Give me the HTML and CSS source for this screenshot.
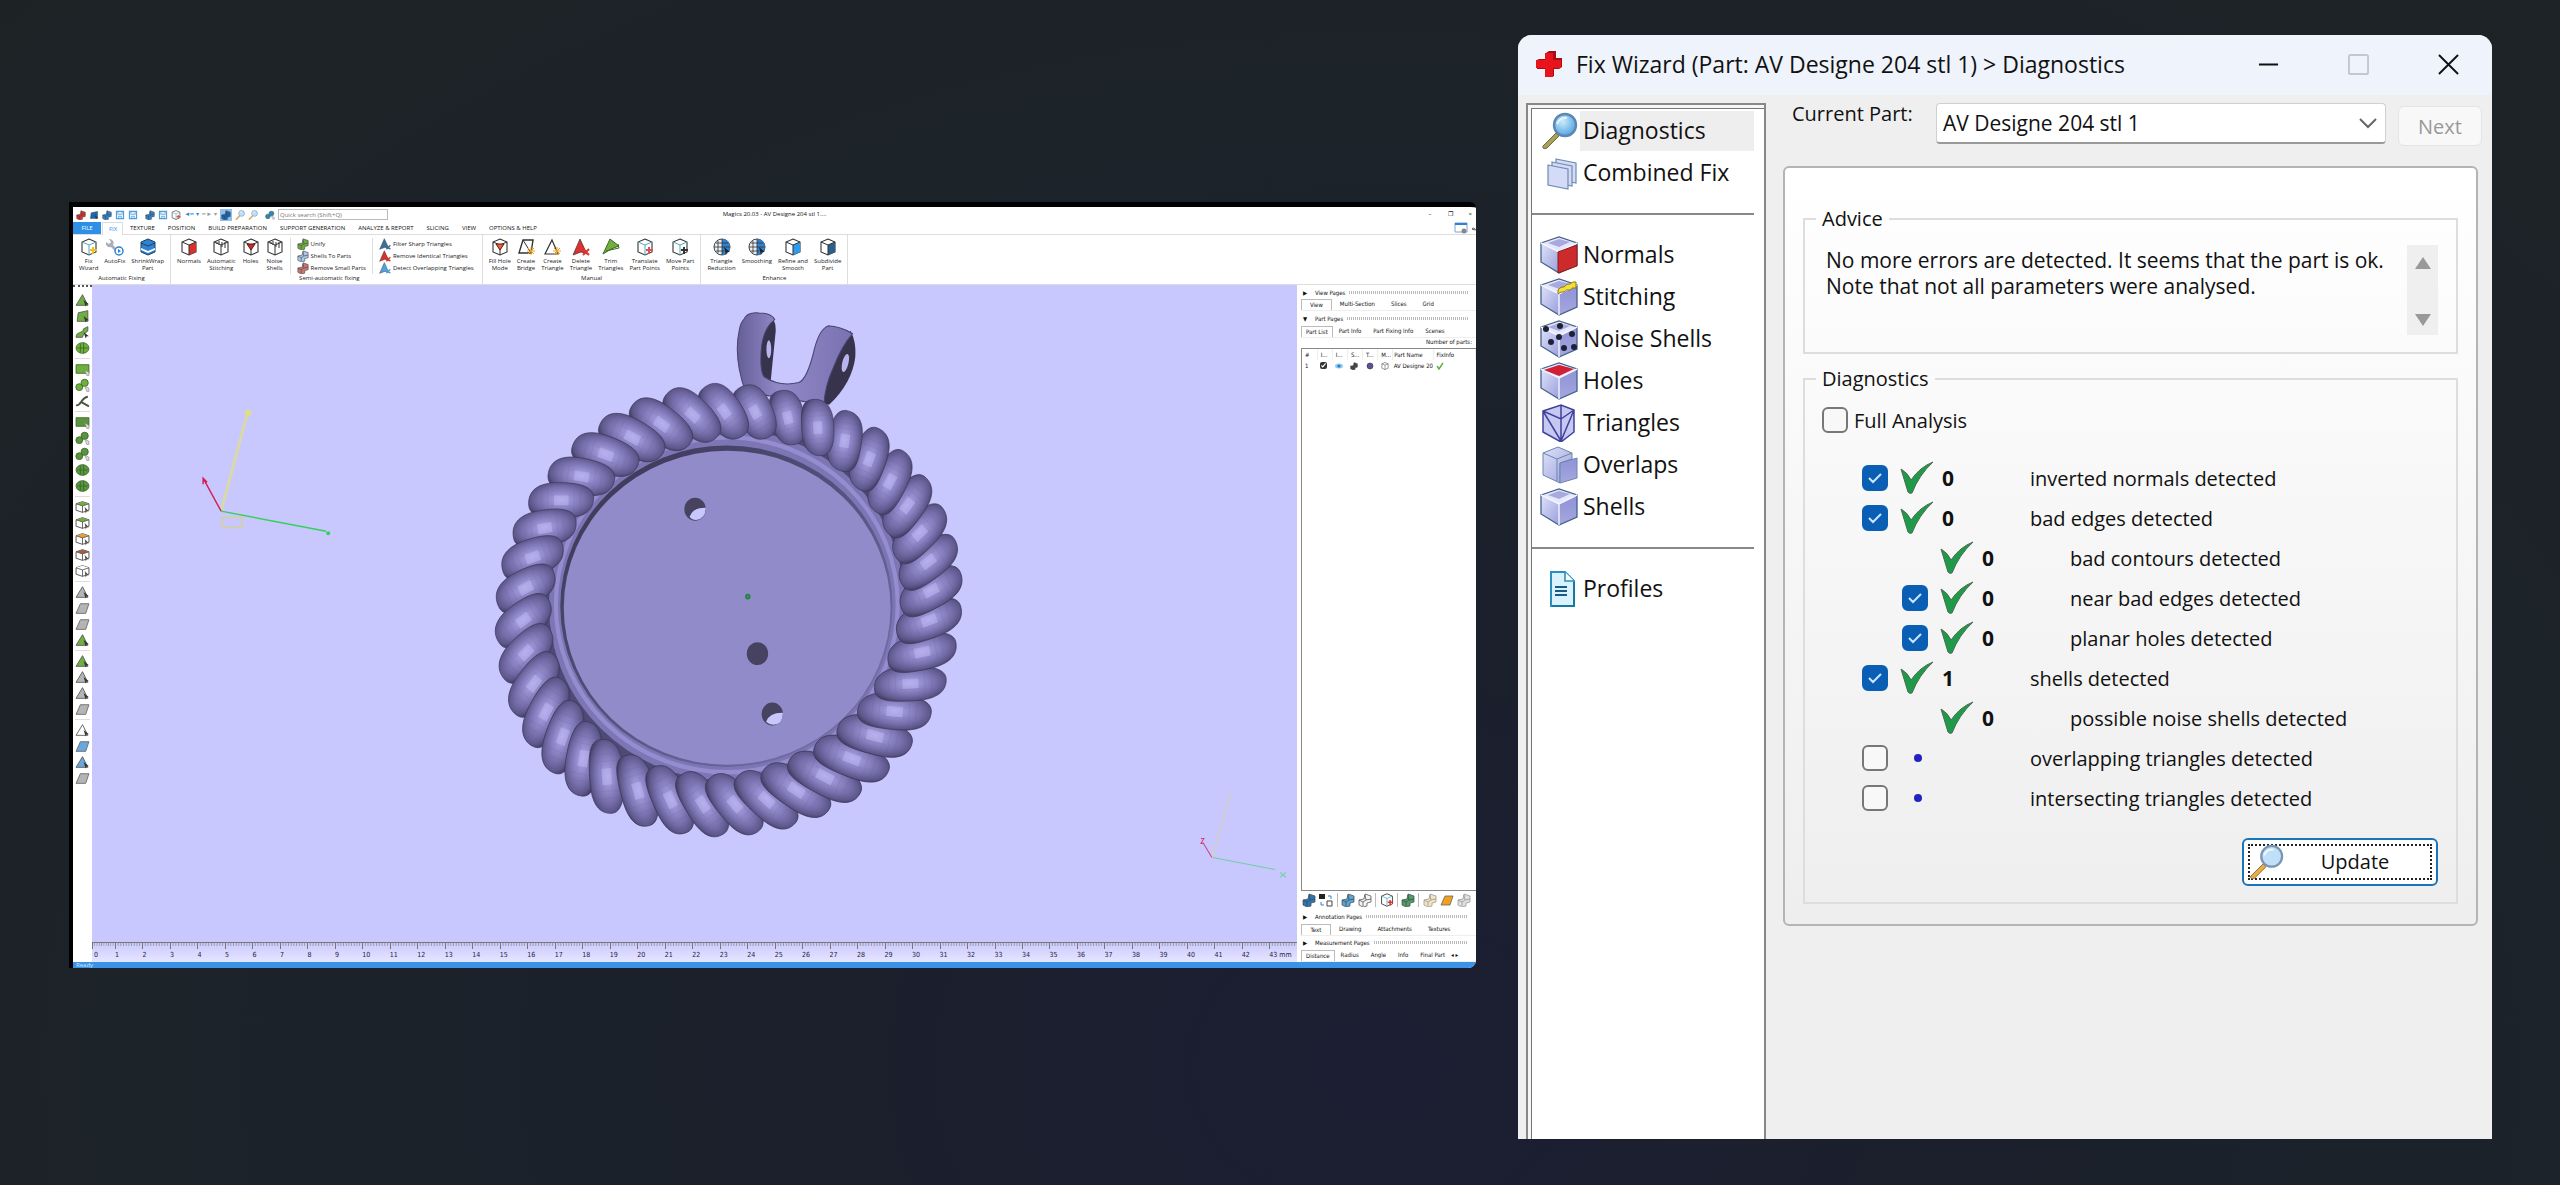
FILE: index.html
```
<!DOCTYPE html>
<html lang="en">
<head>
  <meta charset="UTF-8">
  <title>Fix Wizard</title>
  <link rel="stylesheet" href="styles.css">
</head>
<body>
  <!-- icon sprite -->
  <svg class="sprite" aria-hidden="true">
    <defs>
      <linearGradient id="face" x1="0" y1="0" x2="1" y2="1"><stop offset="0" stop-color="#dfe3fa"/><stop offset="1" stop-color="#9a9edb"/></linearGradient>
      <linearGradient id="side" x1="0" y1="0" x2="0" y2="1"><stop offset="0" stop-color="#8f92d6"/><stop offset="1" stop-color="#a4a7de"/></linearGradient>
      <radialGradient id="lens" cx=".4" cy=".35" r=".7"><stop offset="0" stop-color="#c8ecfb"/><stop offset="1" stop-color="#4f9fe0"/></radialGradient>
      <radialGradient id="beadFill" cx=".5" cy=".48" r=".56"><stop offset="0" stop-color="#aea6e6"/><stop offset=".3" stop-color="#958dce"/><stop offset=".62" stop-color="#7871ae"/><stop offset=".86" stop-color="#5f588c"/><stop offset="1" stop-color="#464069"/></radialGradient>
      <linearGradient id="arm" x1="0" y1="0" x2="1" y2="0"><stop offset="0" stop-color="#655e96"/><stop offset=".35" stop-color="#9188c8"/><stop offset="1" stop-color="#7972b0"/></linearGradient>
      <linearGradient id="rim" x1="0" y1="0" x2="1" y2="1"><stop offset="0" stop-color="#37334f"/><stop offset=".5" stop-color="#57517f"/><stop offset="1" stop-color="#7f78b6"/></linearGradient>
      <g id="bead"><path d="M-103 14C-106-34-64-52-8-52 58-52 106-40 104-6 102 38 62 52 8 52-58 52-100 48-103 14z" fill="url(#beadFill)" stroke="#3b375a" stroke-width="2"/><path d="M-62-24v50M-42-34v68M42-34v68M62-28v56M-34-14H34M-34 16H34" stroke="#5a5488" opacity=".35"/><path d="M-22-15h46v30h-46z" fill="#c3bdf8" opacity=".45"/></g>
    </defs>

    <!-- small ribbon cubes, accent comes from currentColor -->
    <symbol id="cube" viewBox="0 0 18 18"><path d="M9 1l7 3v10l-7 3-7-3V4z" fill="#fff" stroke="#333" stroke-width="1.1"/><path d="M2 4l7 3 7-3M9 7v10" fill="none" stroke="#333"/></symbol>
    <symbol id="cube-side" viewBox="0 0 18 18"><path d="M9 1l7 3v10l-7 3-7-3V4z" fill="#fff" stroke="#333" stroke-width="1.1"/><path d="M9 7l7-3v10l-7 3z" fill="currentColor"/><path d="M2 4l7 3 7-3M9 7v10" fill="none" stroke="#333"/></symbol>
    <symbol id="cube-band" viewBox="0 0 18 18"><path d="M9 1l7 3v10l-7 3-7-3V4z" fill="currentColor" stroke="#1d3f66"/><path d="M2 10l7 3 7-3v2l-7 3-7-3z" fill="#fff"/><path d="M2 5l7 3 7-3" fill="none" stroke="#1d3f66"/></symbol>
    <symbol id="cube-hole" viewBox="0 0 18 18"><path d="M9 1l7 3v10l-7 3-7-3V4z" fill="#fff" stroke="#333" stroke-width="1.1"/><path d="M2 4l7 3 7-3M9 7v10" fill="none" stroke="#333"/><path d="M5 6l8 0-4 6z" fill="currentColor" stroke="#611"/></symbol>
    <symbol id="cube-badge" viewBox="0 0 18 18"><path d="M9 1l7 3v10l-7 3-7-3V4z" fill="#fff" stroke="#333" stroke-width="1.1"/><path d="M2 4l7 3 7-3M9 7v10" fill="none" stroke="#5ab"/><path d="M10 12h7M13 9v7" stroke="currentColor" stroke-width="2"/></symbol>
    <symbol id="cube-stitch" viewBox="0 0 18 18"><path d="M9 1l7 3v10l-7 3-7-3V4z" fill="#fff" stroke="#333" stroke-width="1.1"/><path d="M2 4l7 3 7-3M9 7v10M7 3v4M10 4v5M13 4v6M5 4v2" fill="none" stroke="#333"/></symbol>
    <symbol id="sphere" viewBox="0 0 18 18"><circle cx="9" cy="9" r="8" fill="#e8eef4" stroke="#444"/><path d="M9 1a8 8 0 0 1 0 16z" fill="#2d83d0"/><path d="M1 9h16M9 1v16M3 5h12M3 13h8M5 3v12" stroke="#333" stroke-width=".8"/><path d="M11 9l6 5-3 0-1 3z" fill="#222"/></symbol>
    <symbol id="wrench" viewBox="0 0 18 18"><path d="M3 1l2 3-2 2-3-2a4 4 0 0 0 5 5l6 6 2-2-6-6a4 4 0 0 0-4-6z" fill="#a9afb5"/><circle cx="13" cy="13" r="4" fill="#fff" stroke="#2d83d0" stroke-width="1.5"/><path d="M12 11l3 2-3 2z" fill="#2d83d0"/></symbol>
    <symbol id="tri-line" viewBox="0 0 18 18"><path d="M9 2l6 14H2z" fill="#fff" stroke="#333" stroke-width="1.2"/><path d="M14 9v8M10 13h8M11 10l6 6M17 10l-6 6" stroke="#f0a020"/></symbol>
    <symbol id="bridge" viewBox="0 0 18 18"><path d="M6 2h10l-2 13H2z" fill="#fff" stroke="#333" stroke-width="1.4"/><path d="M6 2l8 13" stroke="#333"/><path d="M14 9v8M10 13h8M11 10l6 6M17 10l-6 6" stroke="#f0a020"/></symbol>
    <symbol id="tri-fill" viewBox="0 0 18 18"><path d="M8 1l7 15-6-2-8 3z" fill="currentColor" stroke="#333" stroke-width=".7"/><path d="M11 11l6 6M17 11l-6 6" stroke="currentColor" stroke-width="2"/></symbol>
    <symbol id="tri-trim" viewBox="0 0 18 18"><path d="M8 1l9 7-8 3-8 5z" fill="#6fae3f" stroke="#3c6a22"/><path d="M4 13l13-3-1-4" fill="none" stroke="#3c6a22"/></symbol>
    <symbol id="blocks" viewBox="0 0 14 14"><path d="M7 1l6 2v6l-4 1v3l-4 1-4-2V7l5-1z" fill="currentColor" stroke="#444" stroke-width=".7"/><path d="M7 2l1 5 5-1M1 7l4 2 3-2M5 9v4" fill="none" stroke="#444" stroke-width=".7"/></symbol>

    <!-- selection toolbar -->
    <symbol id="t-tri" viewBox="0 0 14 12"><path d="M7 1l5 10H1z" fill="currentColor" stroke="#555" stroke-width=".8"/><path d="M8 6l5 4-2 0-1 2z" fill="#333"/></symbol>
    <symbol id="t-plane" viewBox="0 0 14 12"><path d="M3 3l9-2v10H2z" fill="currentColor" stroke="#555" stroke-width=".8"/><path d="M8 6l5 4-2 0-1 2z" fill="#333"/></symbol>
    <symbol id="t-curve" viewBox="0 0 14 12"><path d="M1 11C1 5 7 8 8 3l4-2v4c-2 2-4 2-5 6z" fill="currentColor" stroke="#555" stroke-width=".8"/><path d="M8 6l5 4-2 0-1 2z" fill="#333"/></symbol>
    <symbol id="t-ball" viewBox="0 0 14 12"><ellipse cx="7" cy="6" rx="6" ry="5" fill="currentColor" stroke="#3c6a22" stroke-width=".8"/><path d="M5 2v8M8 1v10M2 6h10" stroke="#3c6a22" stroke-width=".8"/></symbol>
    <symbol id="t-rect" viewBox="0 0 14 12"><path d="M1 2h12v8H1z" fill="currentColor" stroke="#3c6a22" stroke-width=".8"/><path d="M9 7l4 2v3h-2z" fill="#ddd" stroke="#777" stroke-width=".5"/></symbol>
    <symbol id="t-save" viewBox="0 0 14 12"><path d="M2 1h10v10H2z" fill="#e8f3fc" stroke="currentColor" stroke-width="1.6"/><path d="M4 1v4h6V1M5 11V8h4v3" fill="none" stroke="currentColor"/></symbol>
    <symbol id="t-blob" viewBox="0 0 14 12"><circle cx="4" cy="8" r="3.2" fill="currentColor" stroke="#3c6a22" stroke-width=".8"/><circle cx="9" cy="4" r="3.4" fill="currentColor" stroke="#3c6a22" stroke-width=".8"/><path d="M9 7l4 2v3h-2z" fill="#ddd" stroke="#777" stroke-width=".5"/></symbol>
    <symbol id="t-line" viewBox="0 0 14 12"><path d="M1 10c5 1 4-7 11-8M6 7l7 4" fill="none" stroke="#48553f" stroke-width="1.8"/></symbol>
    <symbol id="t-cube" viewBox="0 0 14 12"><path d="M7 1l6 2v6l-6 2-6-2V3z" fill="#fff" stroke="#555" stroke-width=".9"/><path d="M7 1l6 2-6 2-6-2z" fill="currentColor"/><path d="M1 3l6 2 6-2M7 5v6" fill="none" stroke="#555" stroke-width=".8"/><path d="M9 6l4 4-2 0-1 2z" fill="#555"/></symbol>
    <symbol id="t-para" viewBox="0 0 14 12"><path d="M5 2h8l-3 9H1z" fill="currentColor" stroke="#666" stroke-width=".8"/></symbol>

    <!-- wizard page icons -->
    <symbol id="glass" viewBox="0 0 38 38"><path d="M3 34l13-13 3 3L7 36q-5 2-4-2z" fill="#a9a05c" stroke="#6d6a3c"/><circle cx="25" cy="13" r="11" fill="url(#lens)" stroke="#5b87b4" stroke-width="2.4"/><path d="M17 12q3-7 10-6" fill="none" stroke="#fff" stroke-width="2" opacity=".7"/></symbol>
    <symbol id="glass-light" viewBox="0 0 38 38"><path d="M3 34l13-13 3 3L7 36q-5 2-4-2z" fill="#e8ae4a" stroke="#8f6c2c"/><circle cx="25" cy="13" r="11" fill="#bfe0f8" stroke="#7a96b4" stroke-width="2.4"/><path d="M17 12q3-7 10-6" fill="none" stroke="#fff" stroke-width="2" opacity=".8"/></symbol>
    <symbol id="sheets" viewBox="0 0 38 38"><g fill="#d3dbf6" stroke="#6f8bb0" stroke-width="1.2"><path d="M16 5l20 4v20l-20-4z"/><path d="M12 8l20 4v20l-20-4z"/><path d="M8 11l20 4v20L8 31z"/></g></symbol>
    <symbol id="box" viewBox="0 0 38 38"><path d="M1 7l18-6 18 6-18 9z" fill="#e6e7fb"/><path d="M1 7l18 9v21L1 26z" fill="url(#face)"/><path d="M19 16l18-9v22l-18 8z" fill="url(#side)"/><path d="M8 7l11-4 11 3-11 5z" fill="#a7aade"/><path d="M1 7l18-6 18 6v22l-18 8L1 26z" fill="none" stroke="#44628a" stroke-width="1.3"/><path d="M1 7l18 9 18-9M19 16v21" fill="none" stroke="#f4f5ff" stroke-width="1.4"/></symbol>
    <symbol id="box-red" viewBox="0 0 38 38"><use href="#box"/><path d="M18 16l19-7v21l-19 7z" fill="#cd2b2b" stroke="#8a1c1c"/></symbol>
    <symbol id="box-stitch" viewBox="0 0 38 38"><use href="#box"/><path d="M18 12q3-4 6-3 3-4 6-3 3-3 6-2v6q-4-1-6 2-4-1-6 2-3-1-6 2z" fill="#f4e03a" stroke="#8b7a14"/></symbol>
    <symbol id="box-noise" viewBox="0 0 38 38"><use href="#box"/><g fill="#1c2138"><circle cx="6" cy="9" r="3"/><circle cx="20" cy="6" r="3"/><circle cx="11" cy="22" r="3"/><circle cx="19" cy="17" r="3"/><circle cx="32" cy="14" r="3"/><circle cx="24" cy="28" r="3"/><circle cx="34" cy="27" r="3"/></g></symbol>
    <symbol id="box-hole" viewBox="0 0 38 38"><use href="#box"/><path d="M4 8l15-5 15 4-15 7z" fill="#d11f35"/></symbol>
    <symbol id="box-tri" viewBox="0 0 38 38"><path d="M3 7l18-6 13 5v22L21 38 3 28z" fill="#c5c8f0"/><path d="M3 7l18-6 13 5v22L21 38 3 28zM3 7l18 8 13-9M21 15v23M3 7l18 30L34 6M21 1v14" fill="none" stroke="#40409a" stroke-width="1.5"/></symbol>
    <symbol id="box-over" viewBox="0 0 38 38"><path d="M3 7l15-6 14 6v6l-12 4v20L3 29z" fill="url(#face)" stroke="#6c86ac"/><path d="M3 7l14 6 15-6M17 13v22" fill="none" stroke="#6c86ac"/><path d="M20 17l17-5v20l-17 5z" fill="url(#side)" stroke="#6c86ac"/></symbol>
    <symbol id="page" viewBox="0 0 38 38"><path d="M11 2h14l9 9v25H11z" fill="#d9f2fd" stroke="#2b8fbe" stroke-width="2"/><path d="M25 2v9h9" fill="#fff" stroke="#2b8fbe" stroke-width="1.6"/><path d="M15 17h12M15 21h12M15 25h12" stroke="#175b83" stroke-width="2"/><path d="M34 12v24H12" fill="none" stroke="#17799f" stroke-width="2"/></symbol>
    <symbol id="ok" viewBox="0 0 34 34"><path d="M1 8q7 4 10 11Q20 6 33 1 19 14 12 32q-3 1-4-1Q4 18 1 8z" fill="#1f9a49" stroke="#4b6b53"/></symbol>
  </svg>

  <main class="app" aria-label="Magics">
    <header class="app-title">
      <div class="quick">
        <svg style="--c:#d9302c"><use href="#blocks"/></svg>
        <svg style="--c:#1b66b4"><use href="#t-plane"/></svg>
        <svg style="--c:#2d83d0"><use href="#blocks"/></svg>
        <svg style="--c:#4f9fdc"><use href="#t-save"/></svg>
        <svg style="--c:#4f9fdc"><use href="#t-save"/></svg>
        <i></i>
        <svg style="--c:#2d83d0"><use href="#blocks"/></svg>
        <svg style="--c:#4f9fdc"><use href="#t-save"/></svg>
        <svg style="--c:#e05050"><use href="#cube-badge"/></svg>
        <span class="undo">◄━ ▾</span><span class="redo">━► ▾</span>
        <svg class="on" style="--c:#1b66b4"><use href="#blocks"/></svg>
        <svg><use href="#glass-light"/></svg>
        <svg><use href="#glass-light"/></svg>
        <i></i>
        <svg style="--c:#2d83d0"><use href="#t-blob"/></svg>
        <input class="search" type="text" aria-label="Quick search" placeholder="Quick search (Shift+Q)">
      </div>
      <h1>Magics 20.03 - AV Designe 204 stl 1....</h1>
      <div class="app-buttons"><button aria-label="Minimise">–</button><button aria-label="Restore">❐</button><button aria-label="Close">×</button></div>
    </header>

    <nav class="tabs">
      <a class="file" href="#">FILE</a><a class="current" href="#">FIX</a><a href="#">TEXTURE</a><a href="#">POSITION</a><a href="#">BUILD PREPARATION</a><a href="#">SUPPORT GENERATION</a><a href="#">ANALYZE &amp; REPORT</a><a href="#">SLICING</a><a href="#">VIEW</a><a href="#">OPTIONS &amp; HELP</a>
      <svg class="tab-tool" viewBox="0 0 22 12"><path d="M1 1h12v9H1z" fill="#fff" stroke="#7aa6d8"/><path d="M1 1h12v2H1z" fill="#2d83d0"/><circle cx="10" cy="9" r="2.5" fill="#888"/><path d="M18 7q1-2 3 0t-3 0" fill="none" stroke="#555"/></svg>
    </nav>

    <section class="ribbon">
      <div class="group">
        <div class="tools">
          <button><svg style="--c:#f0c020"><use href="#cube-badge"/></svg>Fix<br>Wizard</button>
          <button><svg><use href="#wrench"/></svg>AutoFix</button>
          <button><svg style="--c:#2d83d0"><use href="#cube-band"/></svg>ShrinkWrap<br>Part</button>
        </div>
        <h2>Automatic Fixing</h2>
      </div>
      <div class="group semi">
        <div class="tools">
          <button><svg style="--c:#d9302c"><use href="#cube-side"/></svg>Normals</button>
          <button><svg><use href="#cube-stitch"/></svg>Automatic<br>Stitching</button>
          <button><svg style="--c:#c03030"><use href="#cube-hole"/></svg>Holes</button>
          <button><svg style="--c:#333"><use href="#cube-stitch"/></svg>Noise<br>Shells</button>
          <div class="list">
            <button><svg style="--c:#6fae3f"><use href="#blocks"/></svg>Unify</button>
            <button><svg style="--c:#a9c9ea"><use href="#blocks"/></svg>Shells To Parts</button>
            <button><svg style="--c:#c77"><use href="#blocks"/></svg>Remove Small Parts</button>
          </div>
          <div class="list wide">
            <button><svg style="--c:#3a6f9c"><use href="#tri-fill"/></svg>Filter Sharp Triangles</button>
            <button><svg style="--c:#d9302c"><use href="#tri-fill"/></svg>Remove Identical Triangles</button>
            <button><svg style="--c:#4fa3e0"><use href="#tri-fill"/></svg>Detect Overlapping Triangles</button>
          </div>
        </div>
        <h2>Semi-automatic fixing</h2>
      </div>
      <div class="group">
        <div class="tools">
          <button><svg style="--c:#e06a30"><use href="#cube-hole"/></svg>Fill Hole<br>Mode</button>
          <button><svg><use href="#bridge"/></svg>Create<br>Bridge</button>
          <button><svg><use href="#tri-line"/></svg>Create<br>Triangle</button>
          <button><svg style="--c:#e03030"><use href="#tri-fill"/></svg>Delete<br>Triangle</button>
          <button><svg><use href="#tri-trim"/></svg>Trim<br>Triangles</button>
          <button><svg style="--c:#e05050"><use href="#cube-badge"/></svg>Translate<br>Part Points</button>
          <button><svg style="--c:#333"><use href="#cube-badge"/></svg>Move Part<br>Points</button>
        </div>
        <h2>Manual</h2>
      </div>
      <div class="group">
        <div class="tools">
          <button><svg><use href="#sphere"/></svg>Triangle<br>Reduction</button>
          <button><svg><use href="#sphere"/></svg>Smoothing</button>
          <button><svg style="--c:#2d9bee"><use href="#cube-side"/></svg>Refine and<br>Smooth</button>
          <button><svg style="--c:#2a5f8f"><use href="#cube-side"/></svg>Subdivide<br>Part</button>
        </div>
        <h2>Enhance</h2>
      </div>
    </section>

    <div class="work">
      <aside class="toolbox">
        <div><svg><use href="#t-tri"/></svg><svg><use href="#t-plane"/></svg><svg><use href="#t-curve"/></svg><svg><use href="#t-ball"/></svg></div>
        <div><svg><use href="#t-rect"/></svg><svg><use href="#t-blob"/></svg><svg><use href="#t-line"/></svg></div>
        <div class="deep"><svg><use href="#t-rect"/></svg><svg><use href="#t-blob"/></svg><svg><use href="#t-blob"/></svg><svg><use href="#t-ball"/></svg><svg><use href="#t-ball"/></svg></div>
        <div><svg><use href="#t-cube"/></svg><svg><use href="#t-cube"/></svg><svg class="orange"><use href="#t-cube"/></svg><svg class="brown"><use href="#t-cube"/></svg><svg class="white"><use href="#t-cube"/></svg></div>
        <div class="off"><svg><use href="#t-tri"/></svg><svg><use href="#t-para"/></svg><svg><use href="#t-para"/></svg><svg class="green"><use href="#t-tri"/></svg></div>
        <div class="off"><svg class="green"><use href="#t-tri"/></svg><svg><use href="#t-tri"/></svg><svg><use href="#t-tri"/></svg><svg><use href="#t-para"/></svg></div>
        <div class="off"><svg class="white"><use href="#t-tri"/></svg><svg class="blue"><use href="#t-para"/></svg><svg class="blue"><use href="#t-tri"/></svg><svg><use href="#t-para"/></svg></div>
      </aside>

      <div class="stage">
        <svg class="scene" viewBox="0 0 1204 656" role="img" aria-label="Ring pendant model">
          <g fill="none">
            <path d="M129 226l26-97" stroke="#d9d9a8" stroke-width="3"/><path d="M153 125h6v6h-6z" fill="#dddd90"/>
            <path d="M130 232h20v10h-20z" stroke="#d0d0b0" stroke-width="2"/>
            <path d="M129 226l-18-33m0 6v-6l4 4" stroke="#d01f50" stroke-width="1.4"/>
            <path d="M129 226l105 20" stroke="#35d05a" stroke-width="1.4"/><circle cx="236" cy="248" r="2" fill="#35d05a"/>
            <path d="M1120 572l15-58" stroke="#cfcfd0" stroke-width="2"/><path d="M1134 508l3 4 3-4m-3 4v4" stroke="#cfcfc0"/>
            <path d="M1119 572l-9-15m-2-4h3l-3 5h3" stroke="#d04070"/>
            <path d="M1120 572l62 12m5 3l6 5m0-5l-6 5" stroke="#6fd0a0"/>
          </g>
          <g transform="translate(367 5) scale(.3444 .37)">
            <!-- bail -->
            <path d="M880 95Q919 60 918 110L903 250 960 270 870 240z" fill="#37334c"/>
            <path d="M1135 110Q1152 140 1149 180 1140 250 1073 310L1020 300 1050 220z" fill="#37334c"/>
            <path d="M825 80Q835 58 870 62 905 62 915 80 885 100 877 150 870 220 885 235 930 262 985 250 1010 240 1030 160 1045 105 1070 97 1105 98 1141 118 1110 150 1085 210 1060 260 1058 310L830 275Q795 180 812 110 815 90 825 80z" fill="url(#arm)" stroke="#4a4570" stroke-width="3"/>
            <ellipse cx="898" cy="160" rx="7" ry="24" fill="#b9b5ee"/><ellipse cx="1120" cy="197" rx="9" ry="25" transform="rotate(15 1120 197)" fill="#b9b5ee"/>
            <ellipse cx="780" cy="868" rx="590" ry="530" fill="#4f4a75"/>
            <ellipse cx="776" cy="850" rx="516" ry="474" fill="#7d76b4"/>
            <ellipse cx="776" cy="850" rx="496" ry="452" fill="none" stroke="#958dcf" stroke-width="12"/>
            <ellipse cx="775" cy="854" rx="482" ry="434" fill="url(#rim)"/>
            <ellipse cx="777" cy="858" rx="474" ry="424" fill="#928bca"/>
            <!-- rope, one bead per twist -->
            <g class="rope">
              <use href="#bead" transform="translate(953 344) rotate(76) scale(.73 .92)"/>
              <use href="#bead" transform="translate(858 329) rotate(62) scale(.76 .96)"/>
              <use href="#bead" transform="translate(768 327) rotate(52) scale(.83 .96)"/>
              <use href="#bead" transform="translate(676 337) rotate(41) scale(.9 .96)"/>
              <use href="#bead" transform="translate(586 362) rotate(34) scale(.95 .96)"/>
              <use href="#bead" transform="translate(501 398) rotate(26) scale(.96 .96)"/>
              <use href="#bead" transform="translate(424 444) rotate(18) scale(.95 .96)"/>
              <use href="#bead" transform="translate(354 503) rotate(9) scale(.93 .94)"/>
              <use href="#bead" transform="translate(295 568) rotate(0) scale(.91 .92)"/>
              <use href="#bead" transform="translate(247 643) rotate(-9) scale(.9 .94)"/>
              <use href="#bead" transform="translate(212 722) rotate(-18) scale(.9 .96)"/>
              <use href="#bead" transform="translate(192 805) rotate(-26) scale(.89 .96)"/>
              <use href="#bead" transform="translate(185 892) rotate(-35) scale(.89 .96)"/>
              <use href="#bead" transform="translate(193 980) rotate(-43) scale(.91 .96)"/>
              <use href="#bead" transform="translate(216 1064) rotate(-52) scale(.94 .96)"/>
              <use href="#bead" transform="translate(251 1140) rotate(-61) scale(.96 .96)"/>
              <use href="#bead" transform="translate(300 1207) rotate(-70) scale(.97 .96)"/>
              <use href="#bead" transform="translate(360 1266) rotate(-80) scale(.97 .96)"/>
              <use href="#bead" transform="translate(428 1313) rotate(86) scale(.97 .96)"/>
              <use href="#bead" transform="translate(518 1351) rotate(74) scale(.97 .96)"/>
              <use href="#bead" transform="translate(612 1376) rotate(64) scale(.97 .96)"/>
              <use href="#bead" transform="translate(706 1388) rotate(56) scale(.97 .96)"/>
              <use href="#bead" transform="translate(799 1388) rotate(48) scale(.97 .96)"/>
              <use href="#bead" transform="translate(891 1376) rotate(40) scale(1.01 .96)"/>
              <use href="#bead" transform="translate(977 1350) rotate(32) scale(1.05 .96)"/>
              <use href="#bead" transform="translate(1060 1314) rotate(26) scale(1.08 .96)"/>
              <use href="#bead" transform="translate(1138 1265) rotate(20) scale(1.08 .96)"/>
              <use href="#bead" transform="translate(1205 1204) rotate(14) scale(1.06 .96)"/>
              <use href="#bead" transform="translate(1262 1138) rotate(5) scale(1.03 .94)"/>
              <use href="#bead" transform="translate(1308 1063) rotate(-3) scale(1.01 .9)"/>
              <use href="#bead" transform="translate(1342 978) rotate(-11) scale(.98 .92)"/>
              <use href="#bead" transform="translate(1362 892) rotate(-19) scale(.96 .94)"/>
              <use href="#bead" transform="translate(1368 812) rotate(-27) scale(.95 .94)"/>
              <use href="#bead" transform="translate(1360 734) rotate(-35) scale(.94 .94)"/>
              <use href="#bead" transform="translate(1335 657) rotate(-43) scale(.92 .94)"/>
              <use href="#bead" transform="translate(1299 583) rotate(-52) scale(.9 .94)"/>
              <use href="#bead" transform="translate(1249 518) rotate(-61) scale(.88 .94)"/>
              <use href="#bead" transform="translate(1189 457) rotate(-69) scale(.84 .94)"/>
              <use href="#bead" transform="translate(1118 408) rotate(-81) scale(.79 .94)"/>
              <use href="#bead" transform="translate(1040 371) rotate(86) scale(.74 .9)"/>
            </g>
            <g fill="#47425f"><circle cx="684" cy="592" r="31"/><circle cx="865" cy="982" r="31"/><circle cx="908" cy="1145" r="31"/></g>
            <g fill="#c8c7fc"><path d="M668 612q10-25 47-24 0 30-28 33-12 0-19-9z"/><path d="M890 1166q10-25 49-24 0 30-28 32-12 0-21-8z"/></g>
            <circle cx="837" cy="828" r="6" fill="#4a8a70" stroke="#18863a" stroke-width="4"/>
          </g>
        </svg>
        <ol class="ruler" start="0">
          <li>0</li><li>1</li><li>2</li><li>3</li><li>4</li><li>5</li><li>6</li><li>7</li><li>8</li><li>9</li><li>10</li><li>11</li><li>12</li><li>13</li><li>14</li><li>15</li><li>16</li><li>17</li><li>18</li><li>19</li><li>20</li><li>21</li><li>22</li><li>23</li><li>24</li><li>25</li><li>26</li><li>27</li><li>28</li><li>29</li><li>30</li><li>31</li><li>32</li><li>33</li><li>34</li><li>35</li><li>36</li><li>37</li><li>38</li><li>39</li><li>40</li><li>41</li><li>42</li><li>43 <span>mm</span></li>
        </ol>
      </div>

      <aside class="pages">
        <h3>View Pages</h3>
        <nav class="subtabs"><a class="current" href="#">View</a><a href="#">Multi-Section</a><a href="#">Slices</a><a href="#">Grid</a></nav>
        <h3 class="open">Part Pages</h3>
        <nav class="subtabs part-tabs"><a class="current" href="#">Part List</a><a href="#">Part Info</a><a href="#">Part Fixing Info</a><a href="#">Scenes</a></nav>
        <p class="count">Number of parts:</p>
        <div class="parts">
          <table>
            <thead><tr><th>#</th><th>I...</th><th>I...</th><th>S...</th><th>T...</th><th>M...</th><th class="name">Part Name</th><th class="info">FixInfo</th></tr></thead>
            <tbody><tr>
              <td>1</td>
              <td><input type="checkbox" aria-label="Select part" checked></td>
              <td><svg viewBox="0 0 8 8"><ellipse cx="4" cy="4" rx="4" ry="2.5" fill="#8fcdf2"/><circle cx="4" cy="4" r="1.6" fill="#2a7ec0"/></svg></td>
              <td><svg style="--c:#444"><use href="#blocks"/></svg></td>
              <td><svg viewBox="0 0 8 8"><circle cx="4" cy="4" r="3" fill="#5a5490" stroke="#333" stroke-width=".6"/></svg></td>
              <td><svg><use href="#cube"/></svg></td>
              <td class="name">AV Designe 20</td>
              <td class="info"><svg viewBox="0 0 8 8"><path d="M1 4l2 3 4-6" fill="none" stroke="#5fae3a" stroke-width="1.4"/></svg></td>
            </tr></tbody>
          </table>
        </div>
        <div class="part-tools">
          <svg style="--c:#2a78b8"><use href="#blocks"/></svg>
          <svg viewBox="0 0 14 14"><path d="M0 1h6v5H0z" fill="#222"/><path d="M8 8h5v5H8z" fill="#fff" stroke="#444"/><path d="M9 3h3v3M2 9v3h3" fill="none" stroke="#2d83d0"/></svg>
          <i></i>
          <svg style="--c:#5aa6d8"><use href="#blocks"/></svg>
          <svg style="--c:#f4f4f4"><use href="#blocks"/></svg>
          <i></i>
          <svg style="--c:#e03030"><use href="#cube-badge"/></svg>
          <i></i>
          <svg style="--c:#4f9f6a"><use href="#blocks"/></svg>
          <i></i>
          <svg class="faint" style="--c:#e8d49a"><use href="#blocks"/></svg>
          <svg style="--c:#f0a020"><use href="#t-para"/></svg>
          <svg class="faint" style="--c:#ccc"><use href="#blocks"/></svg>
        </div>
        <h3>Annotation Pages</h3>
        <nav class="subtabs"><a class="current" href="#">Text</a><a href="#">Drawing</a><a href="#">Attachments</a><a href="#">Textures</a></nav>
        <h3>Measurement Pages</h3>
        <nav class="subtabs measure-tabs"><a class="current" href="#">Distance</a><a href="#">Radius</a><a href="#">Angle</a><a href="#">Info</a><a href="#">Final Part</a><span>◂ ▸</span></nav>
      </aside>
    </div>
    <footer class="status">Ready</footer>
  </main>

  <section class="wizard" aria-label="Fix Wizard">
    <header class="wizard-title">
      <svg class="cross" viewBox="0 0 28 28"><path d="M11 3l3-2h7v7h6l0 9-3 2h-5v7l-2 1h-7v-8H2v-9l2-1h6z" fill="#a80d12"/><path d="M10 3h8v7h8v8h-8v9h-8v-9H1v-8h9z" fill="#e8141b"/></svg>
      <h1>Fix Wizard (Part: AV Designe 204 stl 1) &gt; Diagnostics</h1>
      <div class="win-buttons">
        <button aria-label="Minimise"><svg viewBox="0 0 22 22"><path d="M1 11h20" stroke="#111" stroke-width="2"/></svg></button>
        <button aria-label="Maximise" disabled><svg viewBox="0 0 22 22"><rect x="1" y="1" width="20" height="20" rx="2" fill="none" stroke="#c3c7ce" stroke-width="2"/></svg></button>
        <button aria-label="Close"><svg viewBox="0 0 22 22"><path d="M1 1l20 20M21 1L1 21" stroke="#111" stroke-width="2"/></svg></button>
      </div>
    </header>

    <div class="wizard-body">
      <nav class="steps">
        <a class="current" href="#"><svg><use href="#glass"/></svg><span>Diagnostics</span></a>
        <a href="#"><svg><use href="#sheets"/></svg><span>Combined Fix</span></a>
        <hr>
        <a href="#"><svg><use href="#box-red"/></svg><span>Normals</span></a>
        <a href="#"><svg><use href="#box-stitch"/></svg><span>Stitching</span></a>
        <a href="#"><svg><use href="#box-noise"/></svg><span>Noise Shells</span></a>
        <a href="#"><svg><use href="#box-hole"/></svg><span>Holes</span></a>
        <a href="#"><svg><use href="#box-tri"/></svg><span>Triangles</span></a>
        <a href="#"><svg><use href="#box-over"/></svg><span>Overlaps</span></a>
        <a href="#"><svg><use href="#box"/></svg><span>Shells</span></a>
        <hr>
        <a href="#"><svg><use href="#page"/></svg><span>Profiles</span></a>
      </nav>

      <div class="content">
        <div class="part-row">
          <label for="part">Current Part:</label>
          <select id="part"><option>AV Designe 204 stl 1</option></select>
          <button class="next" disabled>Next</button>
        </div>

        <div class="panel">
          <fieldset class="advice">
            <legend>Advice</legend>
            <p>No more errors are detected. It seems that the part is ok.<br>Note that not all parameters were analysed.</p>
            <div class="scroll"><i class="up"></i><i class="down"></i></div>
          </fieldset>

          <fieldset class="diag">
            <legend>Diagnostics</legend>
            <label class="full"><input type="checkbox">Full Analysis</label>
            <ul>
              <li><input type="checkbox" id="c1" checked><svg><use href="#ok"/></svg><b>0</b><label for="c1">inverted normals detected</label></li>
              <li><input type="checkbox" id="c2" checked><svg><use href="#ok"/></svg><b>0</b><label for="c2">bad edges detected</label></li>
              <li class="sub"><i></i><svg><use href="#ok"/></svg><b>0</b><span>bad contours detected</span></li>
              <li class="sub"><input type="checkbox" id="c3" checked><svg><use href="#ok"/></svg><b>0</b><label for="c3">near bad edges detected</label></li>
              <li class="sub"><input type="checkbox" id="c4" checked><svg><use href="#ok"/></svg><b>0</b><label for="c4">planar holes detected</label></li>
              <li><input type="checkbox" id="c5" checked><svg><use href="#ok"/></svg><b>1</b><label for="c5">shells detected</label></li>
              <li class="sub"><i></i><svg><use href="#ok"/></svg><b>0</b><span>possible noise shells detected</span></li>
              <li><input type="checkbox" id="c6"><i class="dot"></i><b></b><label for="c6">overlapping triangles detected</label></li>
              <li><input type="checkbox" id="c7"><i class="dot"></i><b></b><label for="c7">intersecting triangles detected</label></li>
            </ul>
            <button class="update"><svg><use href="#glass-light"/></svg><span>Update</span></button>
          </fieldset>
        </div>
      </div>
    </div>
  </section>
</body>
</html>
```
FILE: styles.css
```
* { box-sizing: border-box; }
body {
  display: flex;
  gap: 42px;
  min-height: 100vh;
  margin: 0;
  padding: 35px 68px 47px 69px;
  font-family: "Open Sans", "Noto Sans", sans-serif;
  color: #111;
  background: radial-gradient(ellipse at 54% 90%, #1c1e33 0, #1b202c 30%, #1b222a 50%, #1d2325 100%);
}
h1, h2, h3, p, ul, ol { margin: 0; padding: 0; font-weight: normal; list-style: none; }
a { color: inherit; text-decoration: none; }
button, input, select { font: inherit; color: inherit; }
svg { display: block; flex: none; color: var(--c, #6fae3f); }
.sprite { position: absolute; width: 0; height: 0; }

/* ---- main application ---- */
.app {
  display: flex;
  flex-direction: column;
  flex: 1403 1 0;
  min-width: 0;
  margin: 167px 0 171px;
  border: solid #000;
  border-width: 5px 0 0 4px;
  border-radius: 0 6px 8px 0;
  background: #fff;
  font-size: 6px;
  line-height: 7px;
  overflow: hidden;
}
.app button { padding: 0; border: 0; background: none; }
.app-title { display: grid; grid-template-columns: 1fr auto 1fr; align-items: center; height: 15px; }
.app-title h1 { font-size: 6px; }
.quick { display: flex; align-items: center; gap: 3px; padding-left: 3px; }
.quick svg { width: 10px; height: 10px; }
.quick i { width: 1px; }
.quick .on { width: 12px; height: 12px; padding: 1px; background: #8fc0ee; }
.undo { width: 15px; color: #2d83d0; text-align: center; white-space: nowrap; }
.redo { width: 15px; color: #999; text-align: center; white-space: nowrap; }
.search { width: 110px; height: 11px; padding: 0 1px; border: 1px solid #bbb; font-size: 6px; }
.search::placeholder { color: #777; }
.app-buttons { display: flex; justify-content: flex-end; gap: 16px; padding-right: 4px; }

.tabs { display: flex; gap: 1px; height: 13px; line-height: 12px; border-bottom: 1px solid #ddd; }
.tabs a { padding: 0 6px; }
.tabs .file { width: 28px; color: #fff; background: #2e8fe6; text-align: center; }
.tabs .current { width: 21px; height: 13px; border: 1px solid #ddd; border-bottom: 0; color: #2e8fe6; background: #fff; }
.tab-tool { width: 22px; height: 12px; margin-left: auto; }

.ribbon { display: flex; height: 50px; border-bottom: 1px solid #ddd; color: #222; }
.group { display: flex; flex-direction: column; padding: 3px 6px 0; border-right: 1px solid #ddd; }
.group.semi { padding-right: 0; }
.group h2 { margin-top: auto; padding-bottom: 2px; font-size: 6px; text-align: center; }
.tools { display: flex; gap: 6px; height: 36px; white-space: nowrap; }
.tools > button { display: flex; flex-direction: column; align-items: center; min-width: 18px; }
.tools svg { width: 18px; height: 18px; margin: 0 auto 2px; }
.list { display: grid; grid-template-rows: repeat(3, 12px); padding-left: 6px; border-left: 1px solid #ddd; }
.list.wide { padding-right: 8px; }
.list button { display: flex; align-items: center; gap: 2px; }
.list svg { width: 12px; height: 12px; margin: 0; }

.work { display: flex; flex: 1; min-height: 0; }
.toolbox { width: 19px; padding: 5px 2px 0; border-top: 2px dotted #555; }
.toolbox div { margin-bottom: 2px; padding-bottom: 2px; border-bottom: 1px solid #ddd; }
.toolbox div:last-child { border: 0; }
.toolbox svg { width: 15px; height: 16px; color: #6fae3f; }
.toolbox .deep svg { color: #5a9440; }
.toolbox .off svg { color: #b4b4b4; }
.toolbox .off .green { color: #6fae3f; }
.toolbox .off .blue { color: #6aa7dd; }
.toolbox .white, .toolbox .off .white { color: #fff; }
.toolbox .orange { color: #e8a030; }
.toolbox .brown { color: #a0603a; }

.stage { display: flex; flex-direction: column; flex: 1; min-width: 0; background: #c8c7fe; }
.scene { flex: 1; width: 100%; min-height: 0; }
.ruler { display: flex; height: 20px; border-top: 1px solid #777; background: linear-gradient(#cbcafe, #e6e5ff); color: #224; font-family: "DejaVu Sans Condensed", sans-serif; font-size: 7px; }
.ruler li {
  flex: 1 1 0;
  min-width: 0;
  padding-top: 9px;
  white-space: nowrap;
  background: linear-gradient(#777, #777) 0 0 / 1px 6px no-repeat, linear-gradient(90deg, #999 1px, transparent 1px) 0 0 / 10% 3px repeat-x;
}
.ruler li:first-child { flex: 0 0 23px; padding-left: 2px; }

.pages { display: flex; flex-direction: column; width: 179px; padding-left: 4px; font-family: "DejaVu Sans Condensed", "Open Sans", sans-serif; }
.pages h3 { display: flex; align-items: center; gap: 4px; height: 14px; padding: 0 2px; font-size: 6px; }
.pages h3::before { content: "▶"; width: 8px; }
.pages h3.open::before { content: "▼"; }
.pages h3::after { content: ""; flex: 1; height: 3px; margin-right: 6px; background: repeating-linear-gradient(90deg, #bbb 0 1px, #fff 1px 2px); }
.subtabs { display: flex; height: 12px; line-height: 10px; border-bottom: 1px solid #eee; white-space: nowrap; }
.subtabs a { padding: 0 8px; }
.subtabs .current { min-width: 30px; border: 1px solid #bbb; border-bottom: 0; background: #fff; text-align: center; }
.part-tabs a, .measure-tabs a { padding: 0 6px; }
.part-tabs .current, .measure-tabs .current { padding: 0 4px; }
.part-tabs { margin-top: 1px; }
.count { height: 8px; padding-right: 4px; text-align: right; }
.parts { flex: 1; margin-top: 2px; border: solid #888; border-width: 1px 0 1px 1px; }
.parts table { table-layout: fixed; width: 100%; border-collapse: collapse; }
.parts th, .parts td { width: 15px; height: 11px; padding: 0 3px; font-weight: normal; text-align: left; white-space: nowrap; overflow: hidden; }
.parts th { border-right: 1px solid #eee; }
.parts .name { width: 40px; padding: 0 1px; }
.parts .info { width: 42px; }
.parts svg { width: 8px; height: 8px; }
.parts input { display: block; width: 7px; height: 7px; margin: 0; accent-color: #333; }
.part-tools { display: flex; align-items: center; justify-content: space-between; height: 19px; padding: 0 5px 0 1px; }
.part-tools svg { width: 14px; height: 14px; }
.part-tools i { width: 1px; height: 14px; background: #bbb; }
.faint { opacity: .6; }
.status { height: 6px; padding-left: 3px; background: #3b93e8; color: #cfe5fb; line-height: 6px; }

/* ---- fix wizard ---- */
.wizard {
  display: flex;
  flex-direction: column;
  flex: 974 1 0;
  min-width: 0;
  border-radius: 14px 14px 0 0;
  background: #efefef;
  font-size: 20px;
  overflow: hidden;
}
.wizard-title { display: flex; align-items: center; height: 60px; padding: 0 0 2px 17px; background: #eff3fb; }
.cross { width: 28px; height: 28px; margin-right: 13px; }
.wizard-title h1 { font-size: 23px; }
.win-buttons { display: flex; gap: 2px; margin-left: auto; }
.win-buttons button { display: grid; place-items: center; width: 88px; height: 56px; padding: 0; border: 0; background: none; }
.win-buttons svg { width: 21px; height: 21px; }
.wizard-body { display: flex; flex: 1; padding: 8px 10px 0 8px; }

.steps { width: 240px; padding: 5px 10px 0 4px; border: solid #888; border-width: 2px 2px 0; background: #fff; box-shadow: inset 3px 3px 0 #f6f6f6, inset 4px 4px 0 #777; font-size: 23px; }
.steps a { display: grid; grid-template-columns: 38px 1fr; align-items: center; gap: 2px; height: 42px; padding-left: 8px; }
.steps svg { width: 38px; height: 38px; }
.steps span { height: 40px; padding-left: 3px; line-height: 38px; }
.steps .current span { background: #eee; }
.steps hr { height: 2px; margin: 19px 0; border: 0; background: #888; }

.content { flex: 1; min-width: 0; padding-left: 17px; }
.part-row { display: flex; align-items: flex-start; padding-left: 9px; }
.part-row label { width: 144px; line-height: 22px; }
.part-row select {
  flex: 1;
  height: 41px;
  padding: 0 6px;
  border: 1px solid #d0d0d0;
  border-bottom: 2px solid #999;
  border-radius: 4px;
  appearance: none;
  background: #fff url("data:image/svg+xml,%3Csvg xmlns='http://www.w3.org/2000/svg' width='18' height='12'%3E%3Cpath d='M1 2l8 8 8-8' fill='none' stroke='%23666' stroke-width='2'/%3E%3C/svg%3E") right 8px center no-repeat;
  font-size: 21px;
}
.next { width: 84px; height: 40px; margin: 3px 0 0 12px; padding: 0; border: 1px solid #e4e4e4; border-radius: 6px; background: #f8f8f8; }
.part-row .next:disabled { color: #999; }

.panel { margin-top: 20px; margin-right: 4px; padding: 38px 18px 20px; border: 2px solid #b4b4b4; border-radius: 6px; background: linear-gradient(#fff, #eee); }
fieldset { min-width: 0; margin: 0; border: 2px solid #ddd; }
legend { padding: 0 6px; line-height: 26px; }
.advice { display: flex; justify-content: space-between; height: 148px; padding: 13px 18px 0 21px; }
.advice legend { margin-left: -10px; }
.advice p { padding-top: 2px; font-size: 21px; line-height: 26px; white-space: nowrap; }
.scroll { display: flex; flex-direction: column; justify-content: space-between; align-items: center; width: 31px; height: 90px; padding: 12px 0 9px; background: #efefef; }
.scroll i { border: 8px solid transparent; }
.scroll .up { border-top: 0; border-bottom: 12px solid #999; }
.scroll .down { border-bottom: 0; border-top: 12px solid #999; }

.diag { display: flex; flex-direction: column; margin-top: 12px; padding: 14px 18px 16px 17px; }
.diag legend { margin-left: -6px; }
.full { display: flex; align-items: center; gap: 6px; height: 28px; }
.diag input { appearance: none; width: 26px; height: 26px; margin: 0; border: 2px solid #777; border-radius: 6px; background: #f8f8f8; }
.diag input:checked { border-color: #0a5fb4; background: #0a5fb4 url("data:image/svg+xml,%3Csvg xmlns='http://www.w3.org/2000/svg' width='16' height='12'%3E%3Cpath d='M2 6l4 4 8-8' fill='none' stroke='%23cfe6ff' stroke-width='2'/%3E%3C/svg%3E") center no-repeat; }
.diag ul { margin-top: 24px; padding-left: 40px; }
.diag li { display: grid; grid-template-columns: 38px 42px 88px 1fr; align-items: center; height: 40px; }
.diag li.sub { padding-left: 40px; }
.diag li svg { width: 34px; height: 34px; }
.diag b { font-size: 21px; }
.dot { width: 8px; height: 8px; margin-left: 14px; border-radius: 50%; background: #2222c0; }
.update { display: flex; align-items: center; align-self: flex-end; width: 196px; height: 48px; margin-top: 20px; padding: 4px; border: 2px solid #1a74b8; border-radius: 6px; background: #fff; }
.update svg { position: absolute; width: 36px; height: 36px; }
.update span { flex: 1; height: 36px; padding-left: 30px; border: 2px dotted #222; line-height: 31px; }
```
